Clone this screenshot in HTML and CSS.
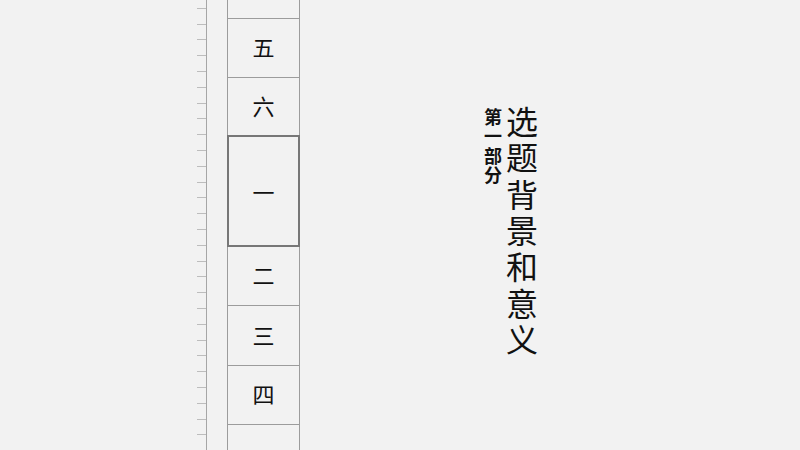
FILE: index.html
```html
<!doctype html>
<html>

<head>
	<meta charset=utf-8>
	<title>选题背景和意义</title>
	<meta name=viewport content="width=device-width, initial-scale=1">
	<link rel="stylesheet" href="styles.css">
</head>

<body>
	<div class="ruler"></div>

	<div class="slides">
		<div class="slide slide-cut"></div>
		<div class="slide">五</div>
		<div class="slide slide-short">六</div>
		<div class="slide slide-active">一</div>
		<div class="slide">二</div>
		<div class="slide slide-tall">三</div>
		<div class="slide">四</div>
		<div class="slide"></div>
	</div>

	<section class="stage">
		<div class="heading">
			<h1 class="title">选题背景和意义</h1>
			<p class="part">第一部分</p>
		</div>
	</section>
</body>
</html>
```

FILE: styles.css
```css
html, body{
	width: 100%;
	height: 100%;
	margin: 0; padding: 0;
	overflow: hidden;
	box-sizing: border-box;

	background-color: #f2f2f2;
	color: #111;
	font-family: "Noto Sans CJK SC", "Noto Sans", sans-serif;

	display: flex;
	flex-direction: row;
}

*, *:after, *:before{
	box-sizing: inherit;
}

.ruler{
	width: 10px;
	height: 100%;
	margin-left: 197px;
	border-right: 1px solid #a6a6a6;
	background: repeating-linear-gradient(to bottom,
		transparent 0, transparent 7.8px,
		#bdbdbd 7.8px, #bdbdbd 8.8px,
		transparent 8.8px, transparent 15.8px);
}

.slides{
	width: 73px;
	height: 100%;
	margin-left: 20px;
	overflow: hidden;
	display: flex;
	flex-direction: column;
	flex-shrink: 0;
}

.slide{
	height: 59px;
	flex-shrink: 0;
	border: 1px solid #9c9c9c;
	border-top: none;
	padding-bottom: 4px;

	display: flex;
	align-items: center;
	justify-content: center;
	font-size: 22px;
	line-height: 1;
}

.slide-cut{ height: 19px; }
.slide-short{ height: 57px; border-bottom: none; }
.slide-tall{ height: 60px; }

.slide-active{
	height: 112px;
	padding-bottom: 0;
	border: 2px solid #777;
}

.stage{
	flex: 1;
	padding: 106px 0 0 184px;
}

.heading{
	display: flex;
	flex-direction: row-reverse;
	justify-content: flex-end;
	align-items: flex-start;
	gap: 4px;
}

.title, .part{
	writing-mode: vertical-rl;
	margin: 0;
	line-height: 1;
}

.title{
	font-size: 32px;
	font-weight: 400;
	letter-spacing: 4.3px;
}

.part{
	font-size: 18px;
	font-weight: 700;
	letter-spacing: 1.5px;
	margin-top: 2px;
}
```
